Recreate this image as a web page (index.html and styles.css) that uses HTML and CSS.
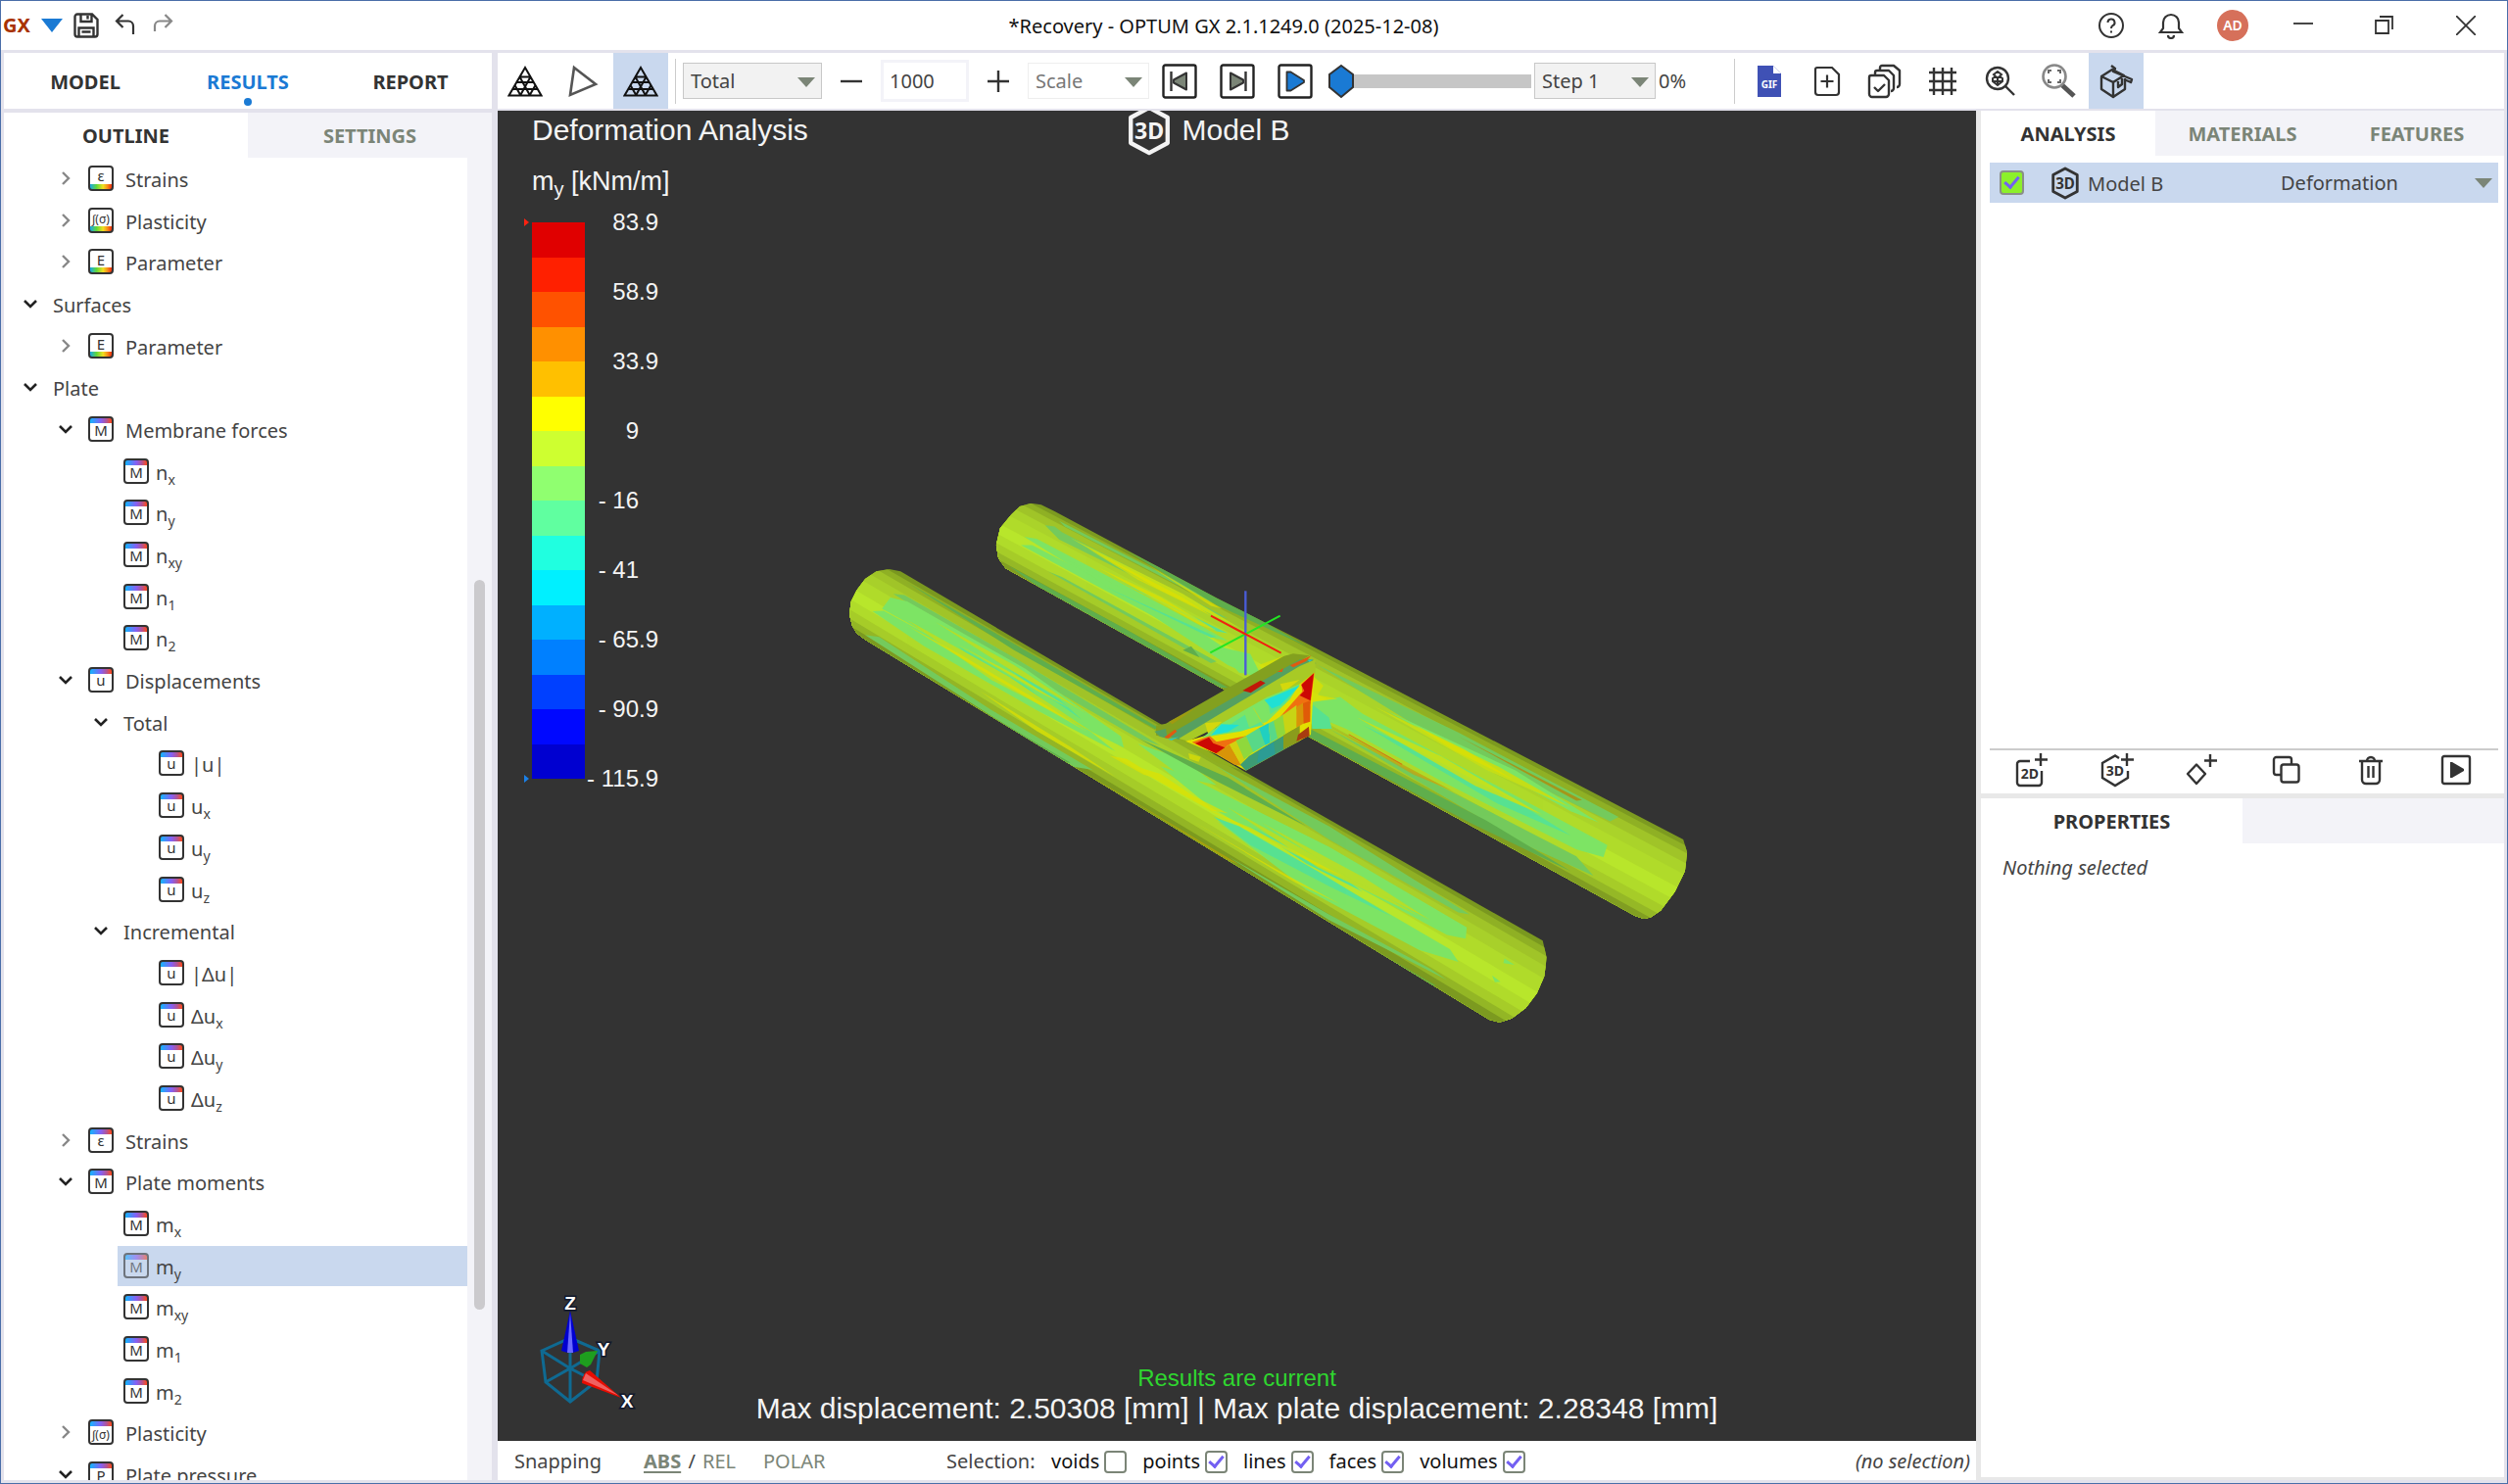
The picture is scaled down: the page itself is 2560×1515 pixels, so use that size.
FILE: index.html
```html
<!DOCTYPE html>
<html lang="en">
<head>
<meta charset="utf-8">
<title>*Recovery - OPTUM GX 2.1.1249.0 (2025-12-08)</title>
<link rel="stylesheet" href="styles.css">
</head>
<body>
<svg class="defs" width="0" height="0" aria-hidden="true">
  <defs>
    <linearGradient id="plate-grad"><stop offset="0" stop-color="#12b4ff"/><stop offset=".5" stop-color="#8560f4"/><stop offset=".75" stop-color="#b0559a"/><stop offset="1" stop-color="#ff4a1a"/></linearGradient>
    <linearGradient id="solid-grad"><stop offset="0" stop-color="#18a8e8"/><stop offset=".3" stop-color="#62d838"/><stop offset=".6" stop-color="#f0e020"/><stop offset=".8" stop-color="#f89018"/><stop offset="1" stop-color="#f03010"/></linearGradient>
    <symbol id="tile-plate" viewBox="0 0 26 26"><rect x="2" y="2" width="22" height="5" fill="url(#plate-grad)"/><rect x="1" y="1" width="24" height="24" rx="3" fill="none" stroke="#333" stroke-width="2"/></symbol>
    <symbol id="tile-solid" viewBox="0 0 26 26"><rect x="2" y="19" width="22" height="5" fill="url(#solid-grad)"/><rect x="1" y="1" width="24" height="24" rx="3" fill="none" stroke="#333" stroke-width="2"/></symbol>
    <symbol id="chev-down" viewBox="0 0 24 24"><path d="M6 9l6 6 6-6" fill="none" stroke="#222" stroke-width="2.6"/></symbol>
    <symbol id="chev-right" viewBox="0 0 24 24"><path d="M9 6l6 6-6 6" fill="none" stroke="#888" stroke-width="2.4"/></symbol>
    <symbol id="mesh" viewBox="0 0 36 32"><path d="M18 2L1.500 30.500h33zM12.500 11.500h11M9.500 17h17M5 24h26M12.500 11.500L23 30.500M23.500 11.500L13 30.500M7.500 20L13.500 30.500M28.500 20L22.500 30.500M18 2v0" fill="none" stroke="#111" stroke-width="2"/></symbol>
    <symbol id="hex3d" viewBox="0 0 32 36"><path d="M16 2l13 7v18l-13 7-13-7V9z" fill="none" stroke="currentColor" stroke-width="3" stroke-linejoin="round"/><text x="16" y="24" text-anchor="middle" font-size="16" font-weight="700" fill="currentColor">3D</text></symbol>
  </defs>
</svg>

<div class="app">
  <header class="titlebar">
    <div class="quick">
      <span class="logo">GX</span>
      <button class="plain" aria-label="Application menu"><svg width="22" height="16" viewBox="0 0 22 16"><path d="M0 1h22L11 15z" fill="#1a7ad4"/></svg></button>
      <button class="plain" aria-label="Save"><svg width="26" height="26" viewBox="0 0 26 26" fill="none" stroke="#333" stroke-width="2.400"><path d="M4 1.500h15l5.500 5.500v15a2.500 2.500 0 0 1-2.500 2.500H4A2.500 2.500 0 0 1 1.500 22V4A2.500 2.500 0 0 1 4 1.500zM7.500 2v7h11V2M14.500 3v3.500M5.500 24v-8.500h15V24M8.500 19.500h9"/></svg></button>
      <button class="plain" aria-label="Undo"><svg width="22" height="26" viewBox="0 0 22 26" fill="none" stroke="#333" stroke-width="2.200"><path d="M8.500 2L2 8.500 8.500 15M2 8.500h12a5 5 0 0 1 5 5V22"/></svg></button>
      <button class="plain" aria-label="Redo"><svg width="22" height="26" viewBox="0 0 22 26" fill="none" stroke="#888" stroke-width="2.200"><path d="M13.500 2L20 8.500 13.500 15M20 8.500H8a5 5 0 0 0-5 5V19"/></svg></button>
    </div>
    <h1 class="window-title">*Recovery - OPTUM GX 2.1.1249.0 (2025-12-08)</h1>
    <div class="window-tools">
      <button class="plain" aria-label="Help"><svg width="28" height="28" viewBox="0 0 28 28" fill="none" stroke="#333" stroke-width="2"><circle cx="14" cy="14" r="12"/><path d="M10.500 11a3.500 3.500 0 1 1 5 3.200c-1 .6-1.500 1.200-1.500 2.800M14 19.500v2"/></svg></button>
      <button class="plain" aria-label="Notifications"><svg width="26" height="28" viewBox="0 0 26 28" fill="none" stroke="#333" stroke-width="2.200"><path d="M2 21h22l-3-4v-6a8 8 0 0 0-16 0v6zM10 24a3 3 0 0 0 6 0"/></svg></button>
      <button class="avatar">AD</button>
      <button class="plain win" aria-label="Minimize"><svg width="20" height="20" viewBox="0 0 20 20" stroke="#333" stroke-width="1.800"><path d="M0 8h20"/></svg></button>
      <button class="plain win" aria-label="Restore"><svg width="20" height="20" viewBox="0 0 20 20" fill="none" stroke="#333" stroke-width="1.800"><path d="M1 5h13v13H1zM5 1h13v13"/></svg></button>
      <button class="plain win" aria-label="Close"><svg width="20" height="20" viewBox="0 0 20 20" stroke="#333" stroke-width="1.800"><path d="M0 0l20 20M20 0L0 20"/></svg></button>
    </div>
  </header>

  <div class="workspace">
    <aside class="left">
      <nav class="modes">
        <a href="#model">MODEL</a>
        <a href="#results" class="on">RESULTS</a>
        <a href="#report">REPORT</a>
      </nav>
      <div class="tabs two"><button class="tab on">OUTLINE</button><button class="tab">SETTINGS</button></div>
      <div class="tree-wrap">
        <ul class="tree">
          <li class="l1"><svg class="chev"><use href="#chev-right"/></svg><svg class="tile"><use href="#tile-solid"/><text x="13" y="16">ε</text></svg><span>Strains</span></li>
          <li class="l1"><svg class="chev"><use href="#chev-right"/></svg><svg class="tile"><use href="#tile-solid"/><text class="small" x="13" y="16">∫(σ)</text></svg><span>Plasticity</span></li>
          <li class="l1"><svg class="chev"><use href="#chev-right"/></svg><svg class="tile"><use href="#tile-solid"/><text x="13" y="17">E</text></svg><span>Parameter</span></li>
          <li class="l0"><svg class="chev"><use href="#chev-down"/></svg><span>Surfaces</span></li>
          <li class="l1"><svg class="chev"><use href="#chev-right"/></svg><svg class="tile"><use href="#tile-solid"/><text x="13" y="17">E</text></svg><span>Parameter</span></li>
          <li class="l0"><svg class="chev"><use href="#chev-down"/></svg><span>Plate</span></li>
          <li class="l1"><svg class="chev"><use href="#chev-down"/></svg><svg class="tile"><use href="#tile-plate"/><text x="13" y="20">M</text></svg><span>Membrane forces</span></li>
          <li class="leaf2"><svg class="tile"><use href="#tile-plate"/><text x="13" y="20">M</text></svg><span>n<sub>x</sub></span></li>
          <li class="leaf2"><svg class="tile"><use href="#tile-plate"/><text x="13" y="20">M</text></svg><span>n<sub>y</sub></span></li>
          <li class="leaf2"><svg class="tile"><use href="#tile-plate"/><text x="13" y="20">M</text></svg><span>n<sub>xy</sub></span></li>
          <li class="leaf2"><svg class="tile"><use href="#tile-plate"/><text x="13" y="20">M</text></svg><span>n<sub>1</sub></span></li>
          <li class="leaf2"><svg class="tile"><use href="#tile-plate"/><text x="13" y="20">M</text></svg><span>n<sub>2</sub></span></li>
          <li class="l1"><svg class="chev"><use href="#chev-down"/></svg><svg class="tile"><use href="#tile-plate"/><text x="13" y="19">u</text></svg><span>Displacements</span></li>
          <li class="l2"><svg class="chev"><use href="#chev-down"/></svg><span>Total</span></li>
          <li class="leaf3"><svg class="tile"><use href="#tile-plate"/><text x="13" y="19">u</text></svg><span>|u|</span></li>
          <li class="leaf3"><svg class="tile"><use href="#tile-plate"/><text x="13" y="19">u</text></svg><span>u<sub>x</sub></span></li>
          <li class="leaf3"><svg class="tile"><use href="#tile-plate"/><text x="13" y="19">u</text></svg><span>u<sub>y</sub></span></li>
          <li class="leaf3"><svg class="tile"><use href="#tile-plate"/><text x="13" y="19">u</text></svg><span>u<sub>z</sub></span></li>
          <li class="l2"><svg class="chev"><use href="#chev-down"/></svg><span>Incremental</span></li>
          <li class="leaf3"><svg class="tile"><use href="#tile-plate"/><text x="13" y="19">u</text></svg><span>|Δu|</span></li>
          <li class="leaf3"><svg class="tile"><use href="#tile-plate"/><text x="13" y="19">u</text></svg><span>Δu<sub>x</sub></span></li>
          <li class="leaf3"><svg class="tile"><use href="#tile-plate"/><text x="13" y="19">u</text></svg><span>Δu<sub>y</sub></span></li>
          <li class="leaf3"><svg class="tile"><use href="#tile-plate"/><text x="13" y="19">u</text></svg><span>Δu<sub>z</sub></span></li>
          <li class="l1"><svg class="chev"><use href="#chev-right"/></svg><svg class="tile"><use href="#tile-plate"/><text x="13" y="19">ε</text></svg><span>Strains</span></li>
          <li class="l1"><svg class="chev"><use href="#chev-down"/></svg><svg class="tile"><use href="#tile-plate"/><text x="13" y="20">M</text></svg><span>Plate moments</span></li>
          <li class="leaf2"><svg class="tile"><use href="#tile-plate"/><text x="13" y="20">M</text></svg><span>m<sub>x</sub></span></li>
          <li class="leaf2 selected"><svg class="tile"><use href="#tile-plate"/><text x="13" y="20">M</text></svg><span>m<sub>y</sub></span></li>
          <li class="leaf2"><svg class="tile"><use href="#tile-plate"/><text x="13" y="20">M</text></svg><span>m<sub>xy</sub></span></li>
          <li class="leaf2"><svg class="tile"><use href="#tile-plate"/><text x="13" y="20">M</text></svg><span>m<sub>1</sub></span></li>
          <li class="leaf2"><svg class="tile"><use href="#tile-plate"/><text x="13" y="20">M</text></svg><span>m<sub>2</sub></span></li>
          <li class="l1"><svg class="chev"><use href="#chev-right"/></svg><svg class="tile"><use href="#tile-plate"/><text class="small" x="13" y="20">∫(σ)</text></svg><span>Plasticity</span></li>
          <li class="l1"><svg class="chev"><use href="#chev-down"/></svg><svg class="tile"><use href="#tile-plate"/><text x="13" y="20">P</text></svg><span>Plate pressure</span></li>
        </ul>
        <div class="scroll"><div class="thumb"></div></div>
      </div>
    </aside>

    <div class="main">
      <div class="toolbar">
        <button class="tool" aria-label="Mesh"><svg width="36" height="32"><use href="#mesh"/></svg></button>
        <button class="tool" aria-label="Undeformed"><svg width="32" height="34" viewBox="0 0 32 34"><path d="M7 3l22 17-26 11z" fill="none" stroke="#555" stroke-width="2.600"/></svg></button>
        <button class="tool on" aria-label="Deformed mesh"><svg width="36" height="32"><use href="#mesh"/></svg></button>
        <span class="sep"></span>
        <label class="pick total"><select aria-label="Displacement type"><option>Total</option></select></label>
        <button class="step" aria-label="Decrease scale"><svg width="22" height="22" viewBox="0 0 22 22"><path d="M0 11h22" stroke="#333" stroke-width="2.400"/></svg></button>
        <input class="scale" type="text" value="1000" aria-label="Scale factor">
        <button class="step" aria-label="Increase scale"><svg width="22" height="22" viewBox="0 0 22 22"><path d="M0 11h22M11 0v22" stroke="#333" stroke-width="2.400"/></svg></button>
        <label class="pick faded"><select aria-label="Scale"><option>Scale</option></select></label>
        <button class="tool" aria-label="First step"><svg width="36" height="36" viewBox="0 0 36 36"><rect x="1.500" y="1.500" width="33" height="33" rx="2" fill="none" stroke="#222" stroke-width="2.400"/><path d="M25 9.500v17L12 19.500v-3z" fill="#7b8577" stroke="#333" stroke-width="2" stroke-linejoin="round"/><path d="M9.500 8v20" stroke="#333" stroke-width="2.400"/></svg></button>
        <button class="tool" aria-label="Last step"><svg width="36" height="36" viewBox="0 0 36 36"><rect x="1.500" y="1.500" width="33" height="33" rx="2" fill="none" stroke="#222" stroke-width="2.400"/><path d="M11 9.500v17l13-7v-3z" fill="#7b8577" stroke="#333" stroke-width="2" stroke-linejoin="round"/><path d="M26.500 8v20" stroke="#333" stroke-width="2.400"/></svg></button>
        <button class="tool" aria-label="Play"><svg width="36" height="36" viewBox="0 0 36 36"><rect x="1.500" y="1.500" width="33" height="33" rx="2" fill="none" stroke="#222" stroke-width="2.400"/><path d="M9.500 8.500h4L27 17v2l-13.500 8.500h-4z" fill="#1a7ad4" stroke="#333" stroke-width="1.800" stroke-linejoin="round"/></svg></button>
        <input class="slider" type="range" min="0" max="100" value="0" aria-label="Step">
        <label class="pick stepsel"><select aria-label="Step number"><option>Step 1</option></select></label>
        <span class="pct">0%</span>
        <span class="sep"></span>
        <button class="tool" aria-label="Export GIF"><svg width="24" height="32" viewBox="0 0 24 32"><path d="M0 0h16l8 8v24H0z" fill="#3f51b5"/><path d="M16 0l8 8h-8z" fill="#fff"/><text x="12" y="23" text-anchor="middle" font-size="10" font-weight="700" fill="#fff">GIF</text></svg></button>
        <button class="tool" aria-label="Add page"><svg width="28" height="32" viewBox="0 0 28 32" fill="none" stroke="#333" stroke-width="2.200"><path d="M4 2h15l7 7v18a3 3 0 0 1-3 3H5a3 3 0 0 1-3-3V4a2 2 0 0 1 2-2zM14 9.500v13M7.500 16h13"/></svg></button>
        <button class="tool" aria-label="Select all"><svg width="36" height="36" viewBox="0 0 36 36" fill="none" stroke="#333" stroke-width="2.400" stroke-linejoin="round"><path d="M4 12h13l5 5v14a3 3 0 0 1-3 3H5a3 3 0 0 1-3-3V14a2 2 0 0 1 2-2zM7 24l4 4 7-7M8 12V9a2 2 0 0 1 2-2h12l5 5v13a3 3 0 0 1-3 3M13 7V4a2 2 0 0 1 2-2h12l6 5v14a3 3 0 0 1-3 3"/></svg></button>
        <button class="tool" aria-label="Grid"><svg width="28" height="28" viewBox="0 0 28 28" stroke="#333" stroke-width="2.400"><path d="M0 5h28M0 14h28M0 23h28M5 0v28M14 0v28M23 0v28"/></svg></button>
        <button class="tool" aria-label="Zoom to model"><svg width="32" height="32" viewBox="0 0 32 32" fill="none" stroke="#333" stroke-width="2.400"><circle cx="13" cy="13" r="11"/><path d="M21 21l9 9"/><path d="M13 6l4 3-2 2 3 2v3l-5 4-5-4v-3l3-2-2-2zM9 12h8M9 16h8M13 12v7" stroke-width="2"/></svg></button>
        <button class="tool" aria-label="Zoom window"><svg width="36" height="36" viewBox="0 0 36 36" fill="none"><path d="M22 22l12 11" stroke="#555" stroke-width="5"/><circle cx="14" cy="13" r="11.500" stroke="#888" stroke-width="2.600" fill="#fff"/><path d="M8 10V7h3M17 7h3v3M20 16v3h-3M11 19H8v-3" stroke="#666" stroke-width="2"/></svg></button>
        <button class="tool on" aria-label="Perspective"><svg width="36" height="36" viewBox="0 0 36 36" fill="none" stroke="#333" stroke-width="2.400" stroke-linejoin="round"><path d="M3 13l11-7 12 6-11 7zM3 13v13l12 8V19M15 34l12-8V15M13 2l4 3-2 3 19 8-1 3-7-3M20 18v6l4-3v-6"/></svg></button>
      </div>

      <div class="lower">
        <div class="center">
          <main class="viewport">
            <svg class="scene" viewBox="508 113 1509 1358" aria-label="Deformed model">
              <svg x="840" y="480" width="900" height="600" viewBox="0 0 1568 1568" preserveAspectRatio="none">
                <defs>
                  <clipPath id="back-tube"><path d="M370 88L388 92 412 110 700 341 860 462 1530 985 1537 1020 1533 1070 1515 1125 1490 1175 1472 1193 1460 1197 1445 1190 865 712 325 262 312 235 308 200 315 155 335 118 350 97z"/></clipPath>
                  <clipPath id="front-tube"><path d="M118 264L138 270 600 677 1280 1255 1287 1300 1283 1350 1270 1395 1250 1435 1225 1463 1203 1473 1185 1466 75 452 60 435 52 415 47 385 50 350 60 320 75 290 95 270z"/></clipPath>
                </defs>
                <g clip-path="url(#back-tube)">
                  <path fill="#7c9a20" d="M0 0h1568v1568H0z"/>
                  <path fill="#8fb024" d="M267 8L1641 1085 1560 1500 0 200z"/>
                  <path fill="#a0c428" d="M263 20L1635 1100 1560 1500 0 200z"/>
                  <path fill="#aad32a" d="M257 37L1626 1121 1560 1500 0 200z"/>
                  <path fill="#b0db2a" d="M251 57L1616 1146 1560 1500 0 200z"/>
                  <path fill="#b8e62b" d="M242 85L1602 1179 1560 1500 0 200z"/>
                  <path fill="#b0db2a" d="M234 108L1591 1208 1560 1500 0 200z"/>
                  <path fill="#a6cc28" d="M227 128L1580 1233 1560 1500 0 200z"/>
                  <path fill="#95b826" d="M221 145L1572 1254 1560 1500 0 200z"/>
                  <path fill="#819e22" d="M216 159L1565 1271 1560 1500 0 200z"/>
                  <g fill="#74ca5c"><path d="M395 147L412 150 425 165 720 395 690 385 420 185z"/><path d="M400 270L425 285 700 510 690 515z"/><path d="M420 135L700 350 690 352 430 150z"/><path d="M880 520L1130 700 1415 925 1400 937 1080 705z"/><path d="M900 690L1340 1030 1370 1082 1250 1000z"/></g>
                  <g fill="#7de464"><path d="M358 178L380 183 560 325 720 455 700 450 500 310z"/><path d="M352 200L372 200 560 345 740 500 600 400z"/><path d="M430 235L640 400 760 520 780 560 720 520z"/><path d="M866 620L920 605 960 650 1395 1000 1388 1032 1340 1012 1100 830 930 690 866 650z"/><path d="M1000 640L1230 800 1380 940 1330 910z"/><path d="M700 470L760 490 780 550 740 540z"/></g>
                  <g fill="#58e292"><path d="M520 290L720 435 700 430z"/><path d="M500 310L700 445 690 447z"/><path d="M1000 715L1250 900 1330 975 1200 890z"/><path d="M960 680L1060 750 1240 890 1100 800z"/><path d="M866 620L900 660 905 690 870 690z"/></g>
                  <g fill="#c4de18"><path d="M440 180L640 330 740 420 600 320z"/><path d="M980 630L1200 790 1330 900 1180 800z"/></g>
                  <g fill="#dfe000" opacity=".7"><path d="M470 208L640 340 690 388 560 292z"/><path d="M490 260L600 338 700 428 670 412z"/><path d="M580 255L710 370 690 362z"/><path d="M872 550L890 575 880 600 915 610 870 618z"/><path d="M950 660L1100 764 1280 920 1160 842z"/><path d="M1050 678L1140 744 1230 828 1120 746z"/><path d="M775 520L820 495 830 520 790 545z"/></g>
                  <g fill="#c8a010" opacity=".7"><path d="M900 682L1000 762 1120 856 1050 812z"/></g>
                  <path fill="none" stroke="#d87010" stroke-width="2" d="M935 705L1030 785"/>
                  <g fill="#5fae4c"><path d="M330 255L540 425 720 580 700 580 420 350z"/><path d="M866 690L1180 935 1330 1070 1150 940 866 712z"/><path d="M540 215L720 350 860 470 700 360z"/><path d="M655 470L670 500 640 480z"/></g>
                  <path fill="#a4a414" d="M570 225L640 279 730 355 640 290z"/>
                  <path fill="#a4961a" d="M1130 710L1350 880 1340 882z"/>
                </g>
                <g clip-path="url(#front-tube)">
                  <path fill="#7a981f" d="M0 0h1568v1568H0z"/>
                  <path fill="#8fb024" d="M12 176L1392 1367 1300 1700-200 349z"/>
                  <path fill="#a0c428" d="M8 189L1385 1382 1300 1700-200 349z"/>
                  <path fill="#a8d02a" d="M3 207L1376 1403 1300 1700-200 349z"/>
                  <path fill="#b0db2a" d="M-4 229L1364 1428 1300 1700-200 349z"/>
                  <path fill="#b8e62b" d="M-12 258L1348 1461 1300 1700-200 349z"/>
                  <path fill="#b0db2a" d="M-20 283L1335 1490 1300 1700-200 349z"/>
                  <path fill="#a6cc28" d="M-27 305L1323 1515 1300 1700-200 349z"/>
                  <path fill="#93b625" d="M-32 324L1314 1536 1300 1700-200 349z"/>
                  <path fill="#7c9a20" d="M-37 338L1306 1552 1300 1700-200 349z"/>
                  <g fill="#74ca5c"><path d="M125 330L145 333 340 500 600 735 560 715 300 490z"/><path d="M75 440L100 445 300 640 480 800 440 790z"/><path d="M700 790L900 950 1150 1185 1130 1180 900 985z"/><path d="M720 1030L900 1185 1080 1330 1110 1360 900 1200z"/></g>
                  <g fill="#7de464"><path d="M105 370L120 340 150 350 360 530 530 710 535 740 480 700 300 530z"/><path d="M88 376L108 375 300 530 470 690 520 750 380 640 180 470z"/><path d="M600 790L640 810 900 1005 1145 1220 1143 1250 1110 1240 960 1120 760 960 690 900z"/><path d="M700 935L900 1090 1115 1278 1130 1312 1060 1280 860 1120z"/><path d="M560 730L640 770 700 840 640 820z"/><path d="M1190 1348L1205 1365 1195 1366zM1212 1303L1230 1320 1210 1315z"/></g>
                  <g fill="#58e292"><path d="M240 470L360 575 440 670 340 590z"/><path d="M300 500L420 610 460 665z"/><path d="M695 925L740 950 880 1070 1010 1190 900 1110 760 1000z"/><path d="M760 950L900 1060 960 1125 860 1050z"/></g>
                  <g fill="#b4de2a"><path d="M150 400L330 550 480 700 300 560z"/><path d="M720 900L900 1050 1060 1190 880 1060z"/><path d="M200 405L340 520 470 650 330 530z"/><path d="M780 940L960 1085 1080 1200 940 1092z"/></g>
                  <g fill="#dfe000" opacity=".7"><path d="M150 415L240 488 400 630 470 698 380 622z"/><path d="M240 465L340 545 440 636 380 588z"/><path d="M510 762L540 770 600 825 570 812z"/><path d="M545 785L600 810 660 870 720 915 690 908 620 850z"/><path d="M280 590L440 738 520 818 380 696z"/><path d="M680 902L760 954 930 1088 880 1056z"/><path d="M660 938L800 1060 920 1158 840 1100z"/><path d="M650 755L672 765 668 778 652 770z"/></g>
                  <g fill="#5fae4c"><path d="M150 300L330 455 600 690 590 690 340 480z"/><path d="M80 455L240 605 440 780 420 780z"/><path d="M760 1080L900 1210 1090 1375 1080 1375z"/><path d="M560 715L720 820 860 950 700 830z"/></g>
                  <g fill="#b4a408" opacity=".8"><path d="M400 752L540 872 740 1052 720 1040 560 892z"/></g>
                  <path fill="#8fae1e" d="M600 685L680 735 750 802 700 780z"/>
                </g>
              </svg>
              <svg x="1160" y="590" width="260" height="220" viewBox="0 0 780 660">
                <path fill="#83a01f" d="M60 452L90 446 450 240 480 232 530 238 500 256 95 490 60 482z"/>
                <path fill="#a09a10" d="M100 440L190 392 110 448z"/>
                <path fill="#55a060" d="M55 470L90 462 95 492 72 486zM92 484L500 250 540 250 550 262 130 495z"/>
                <path fill="#c01808" d="M325 345L380 314 395 322 350 352z"/>
                <path fill="#e05a10" d="M470 268L535 238 520 255 480 274zM85 488L118 464 124 470 98 492zM432 288L450 276 446 288z"/>
                <path fill="#28c8c8" d="M525 252L540 250 530 258zM95 494L130 487 108 497z"/>
                <path fill="#a8ca25" d="M130 492L500 270 548 250 548 290 500 328 160 500z"/>
                <path fill="#d4d80c" d="M440 325L500 312 450 350zM210 445L262 440 220 480z"/>
                <path fill="#e2e000" d="M150 500L230 478 330 440 500 325 545 290 534 480 335 590 245 540z"/>
                <path fill="#7de464" d="M200 490L262 445 330 405 400 365 500 325 470 372 400 440 320 470z"/>
                <path fill="#58e292" d="M250 478L300 440 362 400 390 450 320 468zM400 372L500 328 455 385 410 418z"/>
                <path fill="#7de464" d="M330 412L388 378 408 428 345 458z"/>
                <path fill="#20e0d4" d="M228 482L260 448 315 450 280 472zM392 374L500 330 440 390 415 400z"/>
                <path fill="#f07010" d="M170 503L225 484 245 502 345 482 280 512 250 540zM545 290L505 325 508 348 440 425 533 385z"/>
                <path fill="#cc0804" d="M180 507L222 488 235 506 272 520 244 538zM543 292L505 328 514 346 500 360 533 376z"/>
                <path fill="#d89408" d="M244 538L285 510 322 575 300 572z"/>
                <path fill="#d2d010" d="M285 510L312 495 335 548 322 575z"/>
                <path fill="#8fd83c" d="M305 498L335 484 360 532 330 556z"/>
                <path fill="#58d888" d="M335 484L375 460 398 510 358 534z"/>
                <path fill="#20d0c0" d="M375 460L405 445 410 505 395 512z"/>
                <path fill="#58d888" d="M405 445L425 435 435 490 410 505z"/>
                <path fill="#8fd83c" d="M420 438L450 418 458 476 432 492z"/>
                <path fill="#c8d414" d="M448 420L490 390 492 455 456 478z"/>
                <path fill="#d89408" d="M490 395L512 382 514 445 490 458z"/>
                <path fill="#e05a08" d="M510 384L533 376 532 440 512 446z"/>
                <path fill="#3d9c74" d="M318 572L345 545 480 465 480 510 335 590z"/>
                <path fill="#2c9c94" d="M375 530L420 502 425 540 370 566z"/>
                <path fill="#8a9c1c" d="M450 482L500 452 500 500 450 525z"/>
                <path fill="#a83c10" d="M495 480L528 455 530 484 490 500z"/>
                <path fill="none" stroke="#b4dc30" stroke-width="3" d="M358 398L390 452"/>
                <path fill="none" stroke="#4a5cd8" stroke-width="7" d="M334 40V298"/>
                <path fill="none" stroke="#22e622" stroke-width="6" d="M226 229L440 116"/>
                <path fill="none" stroke="#f02010" stroke-width="6" d="M228 116L443 230"/>
              </svg>
              <g class="triad">
                <g fill="none" stroke="#0f6a92" stroke-width="3"><path d="M553 1379L582 1366 612 1379 609 1410 582 1431 557 1411zM553 1379L582 1397 612 1379M582 1366V1431M557 1411L582 1397 609 1411"/></g>
                <path fill="#0000d0" d="M582 1338L573 1379q9 4 18 0z"/><path fill="#6a6aff" d="M582 1340L579 1381h6z"/>
                <path fill="#1e9e1e" d="M592 1383l6-3 12-1-7 14-4 3-7-4z"/>
                <path fill="#e80c00" d="M634 1427L602 1399q-8 2-8 13z"/><path fill="#f06060" d="M632 1425L598 1402l-3 7z"/>
                <g class="axis"><text x="582" y="1337">Z</text><text x="616" y="1384">Y</text><text x="640" y="1437">X</text></g>
              </g>
            </svg>
            <div class="view-head">
              <span class="analysis">Deformation Analysis</span>
              <span class="model"><svg width="50" height="52"><use href="#hex3d"/></svg>Model B</span>
              <span></span>
            </div>
            <div class="legend">
              <div class="quantity">m<sub>y</sub> [kNm/m]</div>
              <div class="scale-row">
                <div class="marks"><i class="max"></i><i class="min"></i></div>
                <div class="bar"><i class="c1"></i><i class="c2"></i><i class="c3"></i><i class="c4"></i><i class="c5"></i><i class="c6"></i><i class="c7"></i><i class="c8"></i><i class="c9"></i><i class="c10"></i><i class="c11"></i><i class="c12"></i><i class="c13"></i><i class="c14"></i><i class="c15"></i><i class="c16"></i></div>
                <ol class="ticks"><li><span>83</span>.9</li><li><span>58</span>.9</li><li><span>33</span>.9</li><li><span>9</span></li><li><span>- 16</span></li><li><span>- 41</span></li><li><span>- 65</span>.9</li><li><span>- 90</span>.9</li><li><span>- 115</span>.9</li></ol>
              </div>
            </div>
            <div class="view-foot">
              <p class="current">Results are current</p>
              <p class="maxima">Max displacement: 2.50308 [mm] | Max plate displacement: 2.28348 [mm]</p>
            </div>
          </main>
          <footer class="status">
            <span class="snap">Snapping</span>
            <span class="coords"><b>ABS</b> <em>/</em> REL</span>
            <span class="polar">POLAR</span>
            <span class="sel">Selection:</span>
            <label>voids<input type="checkbox"></label>
            <label>points<input type="checkbox" checked></label>
            <label>lines<input type="checkbox" checked></label>
            <label>faces<input type="checkbox" checked></label>
            <label>volumes<input type="checkbox" checked></label>
            <span class="none">(no selection)</span>
          </footer>
        </div>

        <aside class="right">
          <section class="analyses">
            <div class="tabs three"><button class="tab on">ANALYSIS</button><button class="tab">MATERIALS</button><button class="tab">FEATURES</button></div>
            <div class="stage">
              <input type="checkbox" class="run" checked aria-label="Run Model B">
              <svg class="hex" width="32" height="34"><use href="#hex3d"/></svg>
              <span class="stage-name">Model B</span>
              <label class="pick flat"><select aria-label="Analysis type"><option>Deformation</option></select></label>
            </div>
            <div class="actions">
              <button class="plain" aria-label="Add 2D model"><svg width="34" height="36" viewBox="0 0 34 36" fill="none" stroke="#333" stroke-width="2.400"><path d="M15 9H5a3 3 0 0 0-3 3v19a3 3 0 0 0 3 3h19a3 3 0 0 0 3-3V19M26 1v13M20 7.500h13"/><text x="15" y="27" text-anchor="middle" font-size="14" font-weight="700" fill="#333" stroke="none">2D</text></svg></button>
              <button class="plain" aria-label="Add 3D model"><svg width="34" height="36" viewBox="0 0 34 36" fill="none" stroke="#333" stroke-width="2.400"><path d="M19 6l-4-2.500L2 11v15l13 8 13-8v-7M27 1v13M21 7.500h13"/><text x="15" y="24" text-anchor="middle" font-size="14" font-weight="700" fill="#333" stroke="none">3D</text></svg></button>
              <button class="plain" aria-label="Add stage"><svg width="34" height="36" viewBox="0 0 34 36" fill="none" stroke="#333" stroke-width="2.400"><path d="M12 12.500L21 22l-9 10L3 22z" stroke-linejoin="round"/><path d="M26 2v13M20 8.500h13"/></svg></button>
              <button class="plain" aria-label="Duplicate"><svg width="30" height="30" viewBox="0 0 30 30" fill="none" stroke="#333" stroke-width="2.400"><rect x="9.500" y="9.500" width="18" height="18" rx="2.500"/><path d="M9 20H4.500A2.500 2.500 0 0 1 2 17.500v-13A2.500 2.500 0 0 1 4.500 2h13A2.500 2.500 0 0 1 20 4.500V9"/></svg></button>
              <button class="plain" aria-label="Delete"><svg width="26" height="32" viewBox="0 0 26 32" fill="none" stroke="#333" stroke-width="2.400"><path d="M1 7h24M4 7v19a4 4 0 0 0 4 4h10a4 4 0 0 0 4-4V7M9 7a4 4 0 0 1 8 0M10.500 12v12M15.500 12v12"/></svg></button>
              <button class="plain" aria-label="Run"><svg width="32" height="32" viewBox="0 0 32 32"><rect x="2" y="2" width="28" height="28" rx="2" fill="none" stroke="#333" stroke-width="2.400"/><path d="M10 8h2l12 7v2l-12 7h-2z" fill="#333"/></svg></button>
            </div>
          </section>
          <section class="properties">
            <div class="tabs two"><button class="tab on">PROPERTIES</button></div>
            <p>Nothing selected</p>
          </section>
        </aside>
      </div>
    </div>
  </div>
</div>
</body>
</html>
```
FILE: styles.css
```css
* { box-sizing: border-box; }
body { margin: 0; font: 20px/28px "Noto Sans", "Open Sans", sans-serif; color: #444; }
button, input, select { font: inherit; color: inherit; }
.defs { display: block; position: absolute; }
svg text { font-family: "Noto Sans", sans-serif; }

.app { display: flex; flex-direction: column; height: 100vh; border: 1px solid #4a6ea9; padding: 0 3px 3px; background: #e3e2ec; overflow: hidden; }
.plain { display: flex; align-items: center; justify-content: center; padding: 0; border: 0; background: none; }

/* Title bar */
.titlebar { display: flex; flex: none; align-items: center; height: 50px; margin: 0 -3px; background: #fff; }
.quick { display: flex; align-items: center; gap: 12px; width: 400px; padding-left: 2px; }
.logo { font-size: 20px; font-weight: 700; color: #a83200; }
.quick .logo + .plain { margin-right: -1px; margin-left: -1px; }
.quick .plain + .plain + .plain { margin-left: 4px; }
.window-title { flex: 1; margin: 0; padding-top: 2px; text-align: center; font-size: 20px; font-weight: 400; color: #111; }
.window-tools { display: flex; align-items: center; justify-content: flex-end; width: 462px; padding-right: 32px; }
.window-tools .plain { margin-right: 34px; }
.avatar { width: 32px; height: 32px; margin-right: 46px; padding: 0; border: 0; border-radius: 50%; background: #d6705a; color: #fff; font-size: 14px; font-weight: 600; }
.window-tools .win { margin: 0 0 0 63px; }
.window-tools .avatar + .win { margin-left: 0; }

/* Columns */
.workspace { display: flex; flex: 1; min-height: 0; margin-top: 3px; }
.left { display: flex; flex: none; flex-direction: column; width: 498px; margin-right: 6px; }
.main { display: flex; flex: 1; flex-direction: column; min-width: 0; }
.lower { display: flex; flex: 1; min-height: 0; background: #e8e8e8; }
.center { display: flex; flex: 1; flex-direction: column; min-width: 0; }
.right { display: flex; flex: none; flex-direction: column; width: 534px; margin-left: 5px; }

/* Left panel */
.modes { display: grid; grid-template-columns: repeat(3, 1fr); flex: none; height: 57px; margin-bottom: 4px; background: #fff; }
.modes a { position: relative; display: flex; align-items: center; justify-content: center; padding-top: 2px; color: #333; font-weight: 700; text-decoration: none; }
.modes .on { color: #1a7ad4; }
.modes .on::after { content: ""; position: absolute; bottom: 3px; width: 8px; height: 8px; border-radius: 50%; background: #1a7ad4; }
.tabs { display: grid; flex: none; height: 46px; background: #f3f3f8; }
.two { grid-template-columns: 1fr 1fr; }
.three { grid-template-columns: 1fr 1fr 1fr; }
.tab { padding: 2px 0 0; border: 0; background: none; color: #7b8577; font-weight: 700; }
.tab.on { background: #fff; color: #333; }

.tree-wrap { display: flex; flex: 1; min-height: 0; overflow: hidden; background: #fff; }
.tree { display: grid; flex: 1; grid-template-rows: repeat(32, minmax(41px, 1fr)); height: calc(100% + 16px); margin: 0; padding: 0; list-style: none; }
.tree li { display: flex; align-items: center; padding-bottom: 1px; }
.tree li > span { padding-top: 4px; }
.tree sub { font-size: 14px; line-height: 0; }
.chev { flex: none; width: 24px; height: 24px; margin-right: 11px; }
.tile { flex: none; width: 26px; height: 26px; margin-right: 12px; }
.tile text { font-size: 15px; text-anchor: middle; fill: #333; }
.tile .small { font-size: 12px; }
.l0 { padding-left: 15px; }
.l1 { padding-left: 51px; }
.l2 { padding-left: 87px; }
.leaf2 { margin: 1px 0 1px 116px; padding-left: 6px; }
.leaf3 { margin: 1px 0 1px 152px; padding-left: 6px; }
.leaf2 .tile, .leaf3 .tile { margin-right: 7px; }
.selected { background: #c9d8ee; }
.selected .tile { opacity: .6; }
.scroll { display: grid; grid-template-rows: 431fr 745fr 174fr; flex: none; width: 25px; background: #f3f3f8; }
.thumb { grid-row: 2; width: 11px; margin-left: 7px; border-radius: 6px; background: #cbcacd; }

/* Toolbar */
.toolbar { display: flex; flex: none; align-items: center; gap: 3px; height: 57px; margin-bottom: 2px; background: #fff; }
.tool, .step { display: flex; flex: none; align-items: center; justify-content: center; width: 56px; height: 57px; padding: 0; border: 0; background: none; }
.step { width: 54px; }
.tool.on { background: #c9d8ee; }
.sep { flex: none; width: 1px; height: 46px; margin: 0 4px; background: #ccc; }
.pick { position: relative; flex: none; width: 124px; height: 37px; border: 1px solid #c8c8c8; background: #f2f2f2; }
.pick::after { content: ""; position: absolute; top: 14px; right: 6px; width: 18px; height: 10px; background: #7b8577; clip-path: polygon(0 0, 100% 0, 50% 100%); pointer-events: none; }
.pick select { appearance: none; width: 100%; height: 100%; padding: 0 7px; border: 0; background: none; }
.total { width: 142px; }
.faded { border-color: #eee; background: #fff; color: #777; }
.scale { flex: none; width: 90px; height: 43px; padding: 0 6px; border: 3px solid #f3f3f8; background: #fff; }
.slider { appearance: none; flex: none; width: 210px; height: 36px; margin: 0; background: linear-gradient(#c6c6c6, #c6c6c6) 16px 50% / 194px 14px no-repeat; }
.slider::-webkit-slider-thumb { appearance: none; width: 32px; height: 36px; background: url("data:image/svg+xml,%3Csvg xmlns='http://www.w3.org/2000/svg' viewBox='0 0 32 36'%3E%3Cpath d='M16 2l12 9v13l-12 10L4 24V11z' fill='%231a7ad4' stroke='%23333' stroke-width='2'/%3E%3C/svg%3E") center / 100% 100% no-repeat; }
.pct { flex: none; width: 70px; }

/* Viewport */
.viewport { position: relative; display: flex; flex: 1; flex-direction: column; min-height: 0; overflow: hidden; background: #333; color: #f4f4f4; font-family: "Liberation Sans", Arial, sans-serif; }
.scene { position: absolute; inset: 0; width: 100%; height: 100%; }
.axis text { font: 700 19px "Liberation Sans", sans-serif; text-anchor: middle; fill: #fff; stroke: #10182c; stroke-width: 3px; paint-order: stroke; }
.view-head { position: relative; display: grid; grid-template-columns: 1fr auto 1fr; align-items: center; height: 40px; padding: 0 95px 0 35px; font-size: 30px; line-height: 40px; }
.model { display: flex; align-items: center; gap: 8px; }
.model svg { margin: -6px 0; }
.legend { position: relative; padding: 14px 0 0 27px; }
.quantity { margin-left: 8px; font-size: 27px; line-height: 36px; }
.quantity sub { font-size: 20px; line-height: 0; }
.scale-row { display: flex; margin-top: 24px; }
.marks { display: flex; flex-direction: column; justify-content: space-between; width: 8px; margin: -4px 0; }
.marks i { width: 5px; height: 8px; clip-path: polygon(0 0, 100% 50%, 0 100%); }
.max { background: #f21; }
.min { background: #1a80e8; }
.bar { width: 54px; height: 568px; display: grid; grid-template-rows: repeat(16, 1fr); }
.c1 { background: #e00000; } .c2 { background: #ff2000; } .c3 { background: #ff5200; } .c4 { background: #ff9000; }
.c5 { background: #ffc000; } .c6 { background: #ffff00; } .c7 { background: #ceff30; } .c8 { background: #90ff70; }
.c9 { background: #60ffa0; } .c10 { background: #20ffe0; } .c11 { background: #00f0ff; } .c12 { background: #00b0ff; }
.c13 { background: #0080ff; } .c14 { background: #0040ff; } .c15 { background: #0008ff; } .c16 { background: #0000d0; }
.ticks { display: flex; flex-direction: column; justify-content: space-between; margin: -14px 0; padding: 0; list-style: none; font-size: 24px; line-height: 28px; }
.ticks span { display: inline-block; width: 55px; text-align: right; }
.view-foot { position: relative; margin-top: auto; padding-bottom: 16px; text-align: center; }
.view-foot p { margin: 0; }
.current { font-size: 24px; line-height: 28px; color: #2fd62f; }
.maxima { font-size: 30px; line-height: 34px; }

/* Status bar */
.status { display: flex; flex: none; align-items: center; height: 40px; padding: 2px 6px 0 17px; background: #fff; }
.status label { display: flex; align-items: center; gap: 5px; margin-right: 16px; color: #111; }
.snap { width: 132px; }
.coords { width: 122px; color: #7b8577; }
.coords b { text-decoration: underline; text-underline-offset: 3px; }
.coords em { margin: 0 2px; color: #444; font-style: normal; }
.polar { width: 187px; color: #7b8577; }
.sel { width: 107px; }
.none { margin-left: auto; font-style: italic; }
input[type="checkbox"] { appearance: none; display: grid; flex: none; place-items: center; width: 23px; height: 23px; margin: 0; border: 2px solid #7b8577; border-radius: 4px; background: #fff; }
input[type="checkbox"]:checked::after { content: ""; width: 6px; height: 12px; margin-top: -4px; border: solid #7360f2; border-width: 0 3px 3px 0; rotate: 40deg; }

/* Right panel */
.analyses { display: flex; flex: none; flex-direction: column; height: 50%; min-height: 400px; max-height: 697px; margin-bottom: 5px; background: #fff; }
.stage { display: flex; align-items: center; height: 41px; margin: 7px 6px 0 9px; padding-left: 10px; background: #c9d8ee; }
.stage .run { width: 25px; height: 25px; background: #8cf02a; border-color: #8a8f88; }
.hex { margin: 0 7px 0 26px; color: #333; }
.stage-name { flex: 1; padding-top: 2px; }
.flat { width: 229px; border: 0; background: none; }
.actions { display: grid; grid-template-columns: repeat(6, 1fr); height: 46px; margin: auto 6px 0 9px; padding-bottom: 4px; border-top: 2px solid #ccc; }
.properties { flex: 1; margin-bottom: 3px; background: #fff; }
.properties p { margin: 11px 22px; font-style: italic; }
```
